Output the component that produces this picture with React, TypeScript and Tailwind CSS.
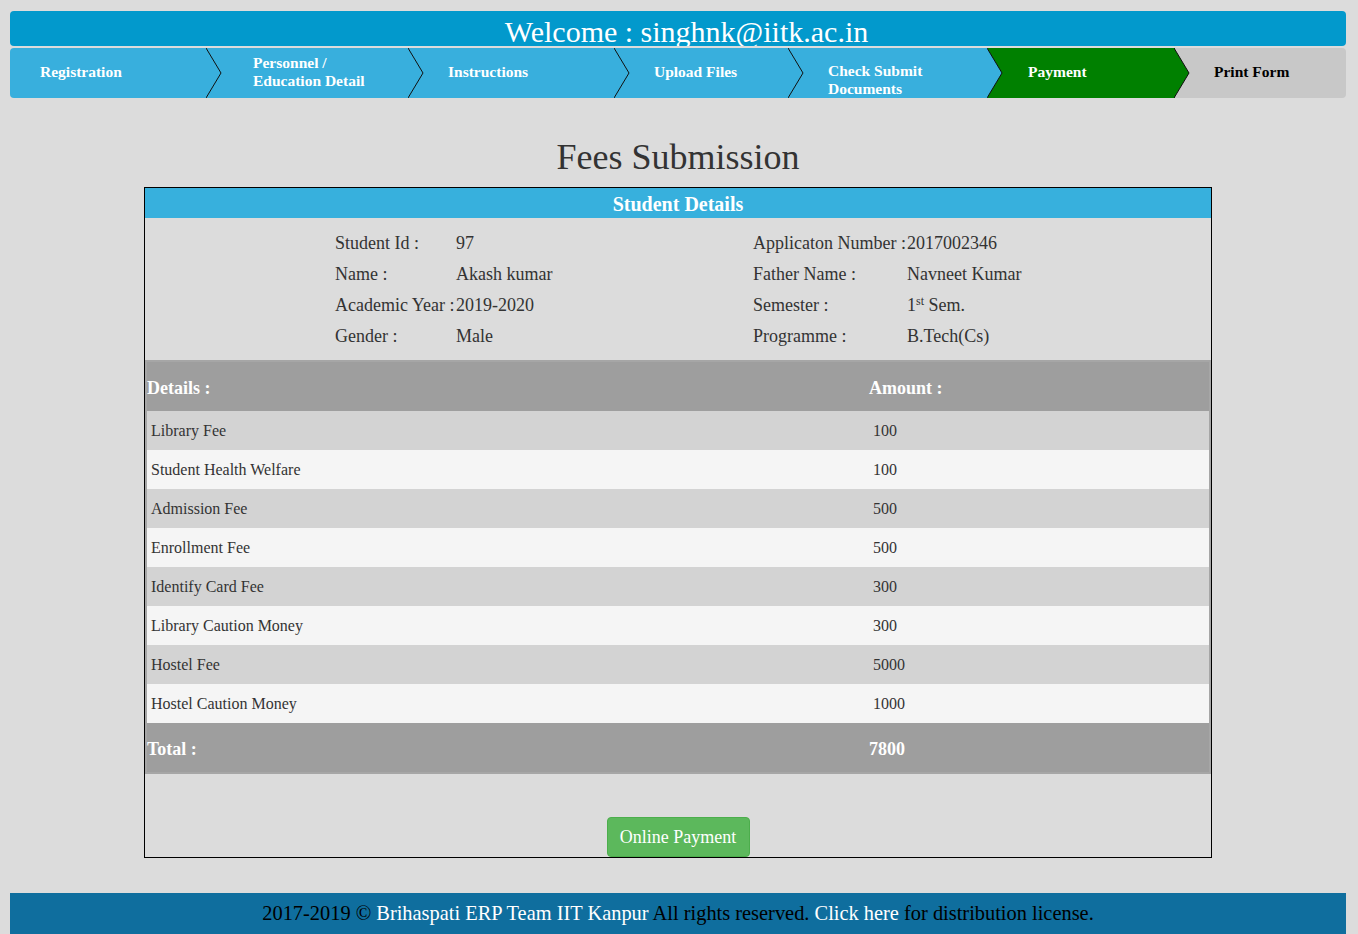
import React from 'react';

const steps = [
  { label: ['Registration'], w: 'w-[197px]', pl: 'pl-[30px] pb-[2px]', bg: 'bg-[#38afdd]', fill: '#38afdd', text: 'text-white', align: 'items-center', first: true },
  { label: ['Personnel /', 'Education Detail'], w: 'w-[202px]', pl: 'pl-[46px] pb-[3px]', bg: 'bg-[#38afdd]', fill: '#38afdd', text: 'text-white', align: 'items-center' },
  { label: ['Instructions'], w: 'w-[206px]', pl: 'pl-[39px] pb-[2px]', bg: 'bg-[#38afdd]', fill: '#38afdd', text: 'text-white', align: 'items-center' },
  { label: ['Upload Files'], w: 'w-[174px]', pl: 'pl-[39px] pb-[2px]', bg: 'bg-[#38afdd]', fill: '#38afdd', text: 'text-white', align: 'items-center' },
  { label: ['Check Submit', 'Documents'], w: 'w-[199px]', pl: 'pl-[39px] pt-[14px]', bg: 'bg-[#38afdd]', fill: '#38afdd', text: 'text-white', align: 'items-start' },
  { label: ['Payment'], w: 'w-[187px]', pl: 'pl-[40px] pb-[2px]', bg: 'bg-[#008000]', fill: '#008000', text: 'text-white', align: 'items-center' },
  { label: ['Print Form'], w: 'w-[171px]', pl: 'pl-[39px] pb-[2px]', bg: 'bg-[#c8c8c8]', fill: '#c8c8c8', text: 'text-black', align: 'items-center', last: true },
];

const fees = [
  ['Library Fee', '100'],
  ['Student Health Welfare', '100'],
  ['Admission Fee', '500'],
  ['Enrollment Fee', '500'],
  ['Identify Card Fee', '300'],
  ['Library Caution Money', '300'],
  ['Hostel Fee', '5000'],
  ['Hostel Caution Money', '1000'],
];

const Arrow = ({ fill }: { fill: string }) => (
  <svg className="absolute top-0 -right-[15px] z-10 h-[50px] w-[16px]" viewBox="0 0 16 50">
    <polygon points="0,0 15,25 0,50" fill={fill} />
    <polyline points="0,0 15,25 0,50" fill="none" stroke="#111" strokeWidth="1" />
  </svg>
);

export default function App() {
  return (
    <div className="h-[934px] overflow-hidden bg-[#dcdcdc] pl-[10px] pr-[12px] pt-[11px] font-['Liberation_Serif',serif]">
      {/* Welcome bar */}
      <div className="h-[35px] overflow-hidden rounded-[4px] bg-[#0299cc] pl-[17px] pt-[4px] text-center text-[30px] leading-[34px] text-white">
        Welcome : singhnk@iitk.ac.in
      </div>

      {/* Steps */}
      <div className="mt-[2px] flex h-[50px]">
        {steps.map((s, i) => (
          <div
            key={i}
            className={`relative flex h-[50px] ${s.w} ${s.pl} ${s.bg} ${s.align} ${s.first ? 'rounded-l-[4px]' : ''} ${s.last ? 'rounded-r-[4px]' : ''}`}
          >
            <div className={`text-[15.5px] font-bold leading-[18px] ${s.text}`}>
              {s.label.map((l) => (
                <div key={l}>{l}</div>
              ))}
            </div>
            {!s.last && <Arrow fill={s.fill} />}
          </div>
        ))}
      </div>

      <h2 className="mb-[10px] mt-[39px] h-[40px] text-center text-[36px] leading-[40px] text-[#333]">Fees Submission</h2>

      {/* Fees box */}
      <div className="mx-auto w-[1068px] border border-black">
        <div className="h-[30px] bg-[#37b0dd] pt-[1px] text-center text-[20px] font-bold leading-[30px] text-white">Student Details</div>

        <div className="grid grid-cols-[121px_297px_154px_1fr] pb-[8px] pl-[190px] pt-[10px] text-[18px] text-[#333]">
          {[
            ['Student Id :', '97', 'Applicaton Number :', '2017002346'],
            ['Name :', 'Akash kumar', 'Father Name :', 'Navneet Kumar'],
            ['Academic Year :', '2019-2020', 'Semester :', 'SEM'],
            ['Gender :', 'Male', 'Programme :', 'B.Tech(Cs)'],
          ].map((r) =>
            r.map((c, j) => (
              <div key={r[0] + j} className="flex h-[31px] items-center whitespace-nowrap">
                {c === 'SEM' ? (
                  <span>
                    1<sup className="text-[12px]">st</sup> Sem.
                  </span>
                ) : (
                  c
                )}
              </div>
            ))
          )}
        </div>

        <div className="border-2 border-[#a6a6a6]">
          <div className="grid h-[49px] grid-cols-[722px_1fr] items-center bg-[#9e9e9e] pt-[3px] text-[18px] font-bold text-white">
            <div>Details :</div>
            <div>Amount :</div>
          </div>
          {fees.map(([d, a], i) => (
            <div
              key={d}
              className={`grid h-[39px] grid-cols-[722px_1fr] items-center text-[16px] text-[#333] ${i % 2 === 0 ? 'bg-[#d3d3d3]' : 'bg-[#f5f5f5]'}`}
            >
              <div className="pl-[4px]">{d}</div>
              <div className="pl-[4px]">{a}</div>
            </div>
          ))}
          <div className="grid h-[49px] grid-cols-[722px_1fr] items-center bg-[#9e9e9e] pt-[3px] text-[18px] font-bold text-white">
            <div>Total :</div>
            <div>7800</div>
          </div>
        </div>

        <div className="mt-[43px] flex justify-center">
          <button className="h-[40px] w-[143px] rounded-[4px] border border-[#4cae4c] bg-[#5cb85c] text-[18px] text-white">
            Online Payment
          </button>
        </div>
      </div>

      {/* Footer */}
      <div className="mt-[35px] h-[41px] bg-[#0f6e9e] text-center text-[20.4px] leading-[41px] text-black">
        2017-2019 © <span className="text-white">Brihaspati ERP Team IIT Kanpur</span> All rights reserved.{' '}
        <span className="text-white">Click here</span> for distribution license.
      </div>
    </div>
  );
}
